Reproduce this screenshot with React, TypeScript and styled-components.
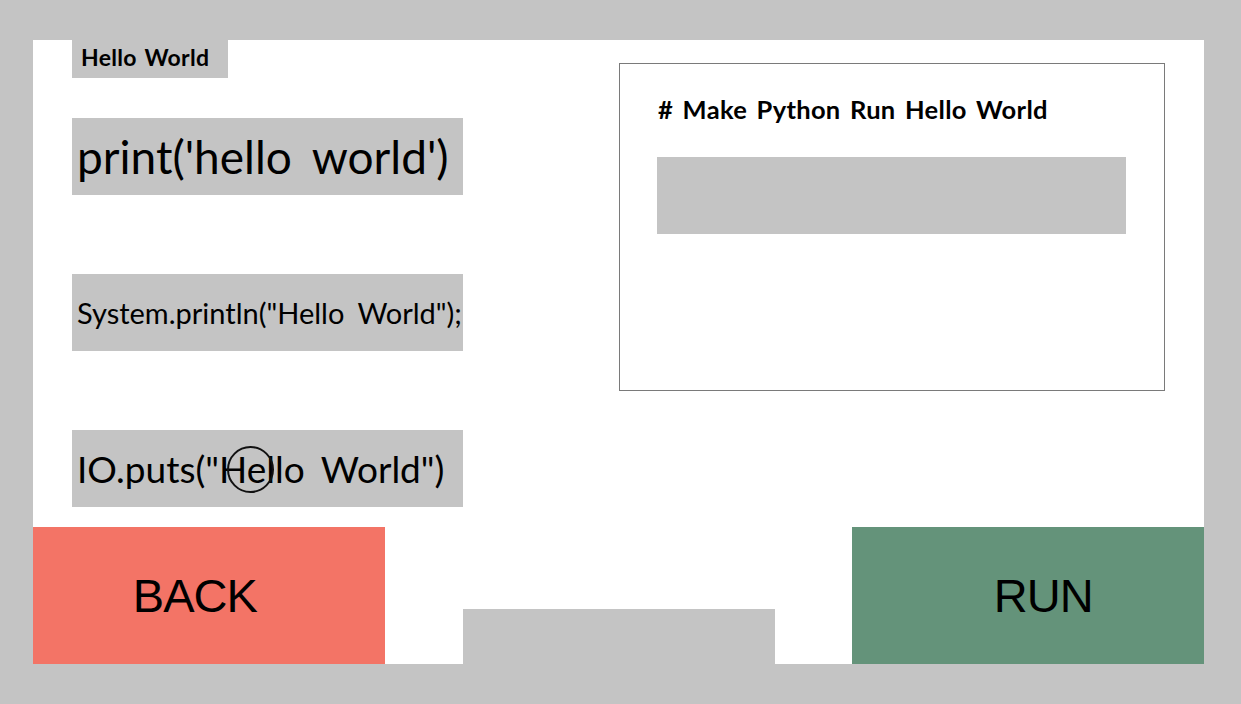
import * as React from 'react';
import styled, { createGlobalStyle } from 'styled-components';

const GlobalStyle = createGlobalStyle`
  html, body {
    margin: 0;
    padding: 0;
    background: #c4c4c4;
  }
  * {
    box-sizing: border-box;
  }
`;

const Page = styled.div`
  width: 1241px;
  height: 704px;
  background: #c4c4c4;
  padding: 40px 37px 40px 33px;
  font-family: 'Lato', 'Liberation Sans', sans-serif;
  color: #000;
`;

const Frame = styled.div`
  display: flex;
  flex-direction: column;
  width: 100%;
  height: 100%;
  background: #ffffff;
`;

const TopArea = styled.section`
  display: flex;
  justify-content: space-between;
  align-items: flex-start;
  height: 487px;
  padding: 0 39px;
`;

const CodeColumn = styled.div`
  display: flex;
  flex-direction: column;
  align-items: flex-start;
  width: 391px;
`;

const Label = styled.div`
  display: flex;
  align-items: center;
  height: 38px;
  padding: 0 0 5px 9px;
  width: 156px;
  background: #c4c4c4;
  font-size: 23px;
  font-weight: 700;
  letter-spacing: 0.3px;
  word-spacing: 2px;
`;

const CodeBlock = styled.div<{ $size: number; $top: number }>`
  position: relative;
  display: flex;
  align-items: center;
  width: 391px;
  height: 77px;
  margin-top: ${({ $top }) => $top}px;
  padding: 0 0 0 5px;
  background: #c4c4c4;
  font-size: ${({ $size }) => $size}px;
  font-weight: 400;
  white-space: nowrap;
  word-spacing: ${({ $size }) => Math.round($size * 0.2)}px;
`;

const TouchCircle = styled.span`
  position: absolute;
  left: 155px;
  top: 16px;
  width: 47px;
  height: 47px;
  border: 2px solid #111;
  border-radius: 50%;
`;

const TaskPanel = styled.section`
  display: flex;
  flex-direction: column;
  margin-top: 23px;
  width: 546px;
  height: 328px;
  border: 1px solid #7a7a7a;
  padding: 30px 38px 0 37px;
`;

const TaskTitle = styled.h2`
  margin: 0;
  padding-left: 1px;
  font-size: 25.5px;
  font-weight: 700;
  letter-spacing: 0.3px;
  word-spacing: 3px;
`;

const AnswerSlot = styled.div`
  margin-top: 33px;
  width: 469px;
  height: 77px;
  background: #c4c4c4;
`;

const BottomRow = styled.footer`
  display: flex;
  align-items: flex-end;
  height: 137px;
`;

const ActionButton = styled.button<{ $bg: string; $shift: number }>`
  display: flex;
  align-items: center;
  justify-content: center;
  width: 352px;
  height: 137px;
  border: none;
  margin: 0;
  padding: 0 ${({ $shift }) => ($shift < 0 ? -$shift * 2 : 0)}px 0
    ${({ $shift }) => ($shift > 0 ? $shift * 2 : 0)}px;
  background: ${({ $bg }) => $bg};
  font-family: 'Liberation Sans', sans-serif;
  font-size: 47px;
  font-weight: 400;
  color: #000;
  letter-spacing: -1px;
`;

const DropSlot = styled.div`
  width: 313px;
  height: 55px;
  margin: 0 77px 0 78px;
  background: #c4c4c4;
`;

const blocks = [
  { text: "print('hello world')", size: 46, top: 40 },
  { text: 'System.println("Hello World");', size: 29, top: 79 },
  { text: 'IO.puts("Hello World")', size: 37, top: 79 },
];

export default function App() {
  return (
    <>
      <GlobalStyle />
      <Page>
        <Frame>
          <TopArea>
            <CodeColumn>
              <Label>Hello World</Label>
              {blocks.map((b, i) => (
                <CodeBlock key={i} $size={b.size} $top={b.top}>
                  {b.text}
                  {i === 2 && <TouchCircle />}
                </CodeBlock>
              ))}
            </CodeColumn>
            <TaskPanel>
              <TaskTitle># Make Python Run Hello World</TaskTitle>
              <AnswerSlot />
            </TaskPanel>
          </TopArea>
          <BottomRow>
            <ActionButton $bg='#f37466' $shift={-14}>BACK</ActionButton>
            <DropSlot />
            <ActionButton $bg='#64937a' $shift={15}>RUN</ActionButton>
          </BottomRow>
        </Frame>
      </Page>
    </>
  );
}
